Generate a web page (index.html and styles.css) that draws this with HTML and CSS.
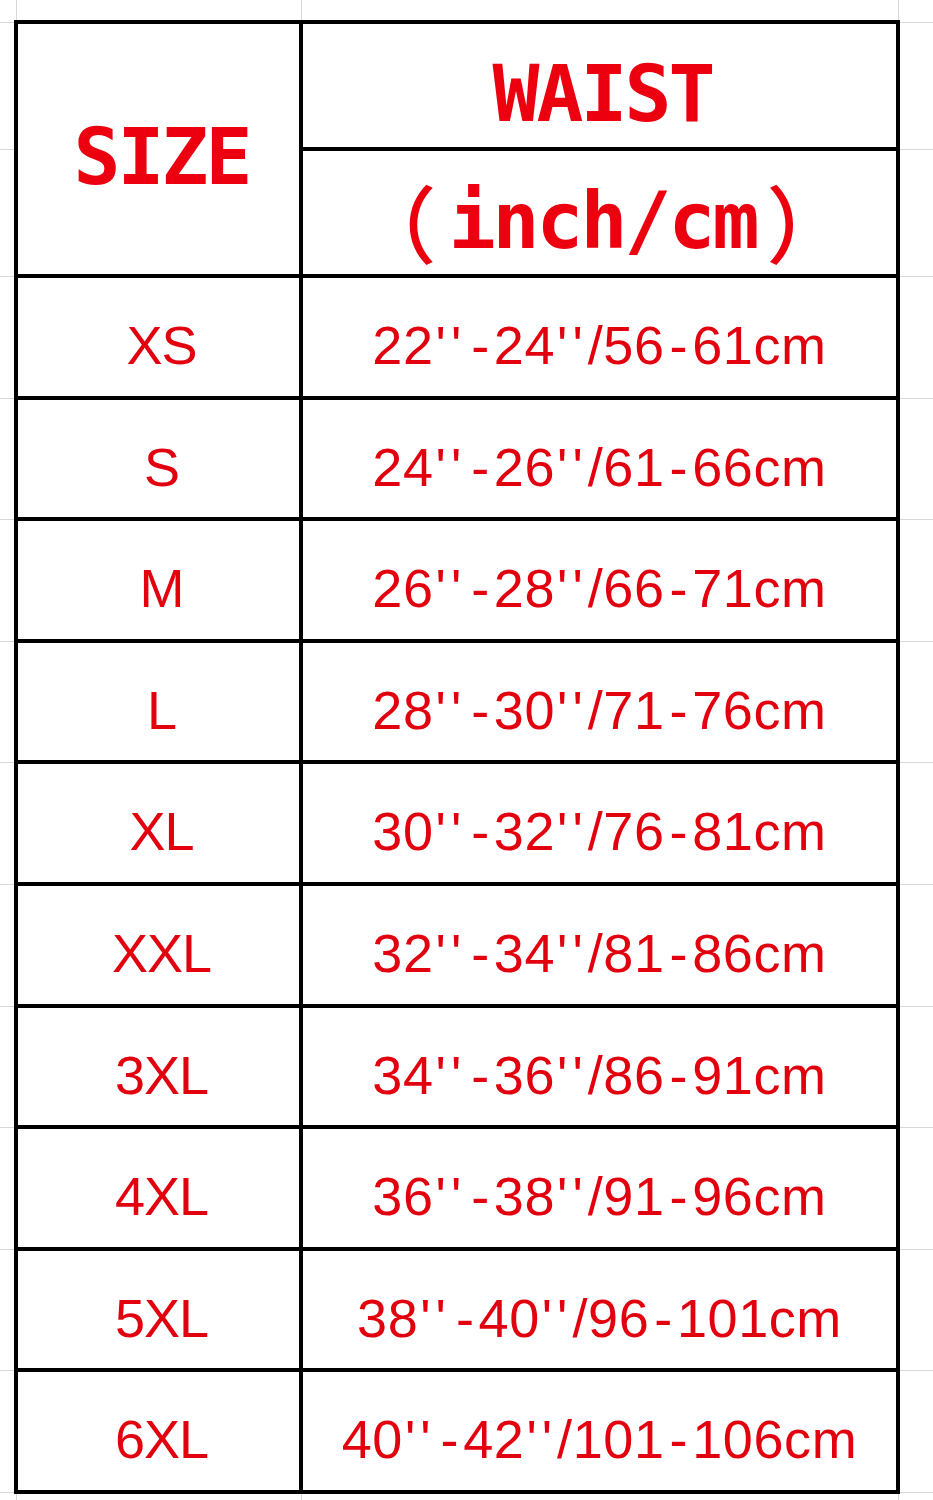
FILE: index.html
```html
<!DOCTYPE html>
<html lang="en">
<head>
<meta charset="utf-8">
<title>Waist Size Chart</title>
<link rel="stylesheet" href="styles.css">
</head>
<body>
<div class="chart">
  <div class="cell head size-head">SIZE</div>
  <div class="cell head">WAIST</div>
  <div class="cell head unit"><span class="paren open">（</span>inch/cm<span class="paren close">）</span></div>

  <div class="cell size">XS</div><div class="cell val">22<span class="q">''</span><span class="h">-</span>24<span class="q">''</span>/56<span class="h">-</span>61cm</div>
  <div class="cell size">S</div><div class="cell val">24<span class="q">''</span><span class="h">-</span>26<span class="q">''</span>/61<span class="h">-</span>66cm</div>
  <div class="cell size">M</div><div class="cell val">26<span class="q">''</span><span class="h">-</span>28<span class="q">''</span>/66<span class="h">-</span>71cm</div>
  <div class="cell size">L</div><div class="cell val">28<span class="q">''</span><span class="h">-</span>30<span class="q">''</span>/71<span class="h">-</span>76cm</div>
  <div class="cell size">XL</div><div class="cell val">30<span class="q">''</span><span class="h">-</span>32<span class="q">''</span>/76<span class="h">-</span>81cm</div>
  <div class="cell size">XXL</div><div class="cell val">32<span class="q">''</span><span class="h">-</span>34<span class="q">''</span>/81<span class="h">-</span>86cm</div>
  <div class="cell size">3XL</div><div class="cell val">34<span class="q">''</span><span class="h">-</span>36<span class="q">''</span>/86<span class="h">-</span>91cm</div>
  <div class="cell size">4XL</div><div class="cell val">36<span class="q">''</span><span class="h">-</span>38<span class="q">''</span>/91<span class="h">-</span>96cm</div>
  <div class="cell size">5XL</div><div class="cell val">38<span class="q">''</span><span class="h">-</span>40<span class="q">''</span>/96<span class="h">-</span>101cm</div>
  <div class="cell size">6XL</div><div class="cell val">40<span class="q">''</span><span class="h">-</span>42<span class="q">''</span>/101<span class="h">-</span>106cm</div>
</div>
</body>
</html>
```
FILE: styles.css
```css
html {
  background-color: #fff;
  background-repeat: no-repeat;
  background-image:
    linear-gradient(#d8d8d8, #d8d8d8), linear-gradient(#d8d8d8, #d8d8d8),
    linear-gradient(#d8d8d8, #d8d8d8), linear-gradient(#d8d8d8, #d8d8d8),
    linear-gradient(#d8d8d8, #d8d8d8), linear-gradient(#d8d8d8, #d8d8d8),
    linear-gradient(#d8d8d8, #d8d8d8), linear-gradient(#d8d8d8, #d8d8d8),
    linear-gradient(#d8d8d8, #d8d8d8), linear-gradient(#d8d8d8, #d8d8d8),
    linear-gradient(#d8d8d8, #d8d8d8), linear-gradient(#d8d8d8, #d8d8d8),
    linear-gradient(#d8d8d8, #d8d8d8),
    linear-gradient(#d8d8d8, #d8d8d8), linear-gradient(#d8d8d8, #d8d8d8),
    linear-gradient(#d8d8d8, #d8d8d8);
  background-size:
    100% 1px, 100% 1px, 100% 1px, 100% 1px, 100% 1px, 100% 1px, 100% 1px,
    100% 1px, 100% 1px, 100% 1px, 100% 1px, 100% 1px, 100% 1px,
    1px 100%, 1px 100%, 1px 100%;
  background-position:
    0 22px, 0 149px, 0 276px, 0 398px, 0 519px, 0 641px, 0 762px,
    0 884px, 0 1006px, 0 1127px, 0 1249px, 0 1370px, 0 1492px,
    16px 0, 301px 0, 898px 0;
  min-height: 1500px;
}

body {
  margin: 0;
  padding: 20px 0 0 14px;
}

.chart {
  box-sizing: border-box;
  width: 886px;
  height: 1474px;
  padding: 4px;
  background: #000;
  display: grid;
  grid-template-columns: 281px 593px;
  grid-template-rows: 123px 123px 118px 117px 118px 117px 118px 118px 117px 118px 117px 118px;
  gap: 4px;
}

.cell {
  background: #fff;
  display: flex;
  align-items: center;
  justify-content: center;
  padding-top: 16px;
  box-sizing: border-box;
  color: #e2000f;
  white-space: nowrap;
}

.size-head {
  grid-row: span 2;
}

.head {
  font-family: "DejaVu Sans Mono", monospace;
  font-weight: bold;
  font-size: 78px;
  letter-spacing: -3px;
  color: #ec0010;
  padding-left: 6px;
}

.unit {
  padding-left: 4px;
}

.paren {
  font-family: "Noto Sans CJK SC", sans-serif;
  font-weight: 500;
  font-size: 84px;
  letter-spacing: 0;
}

.open {
  margin-right: 12px;
}

.close {
  margin-left: 10px;
}

.size,
.val {
  font-family: "Liberation Sans", Arial, sans-serif;
  font-size: 54px;
  letter-spacing: 0.6px;
}

.size {
  letter-spacing: -1px;
  padding-left: 6px;
}

.q {
  letter-spacing: 5px;
  padding-left: 2px;
}

.h {
  padding: 0 4px 0 5px;
}
```
